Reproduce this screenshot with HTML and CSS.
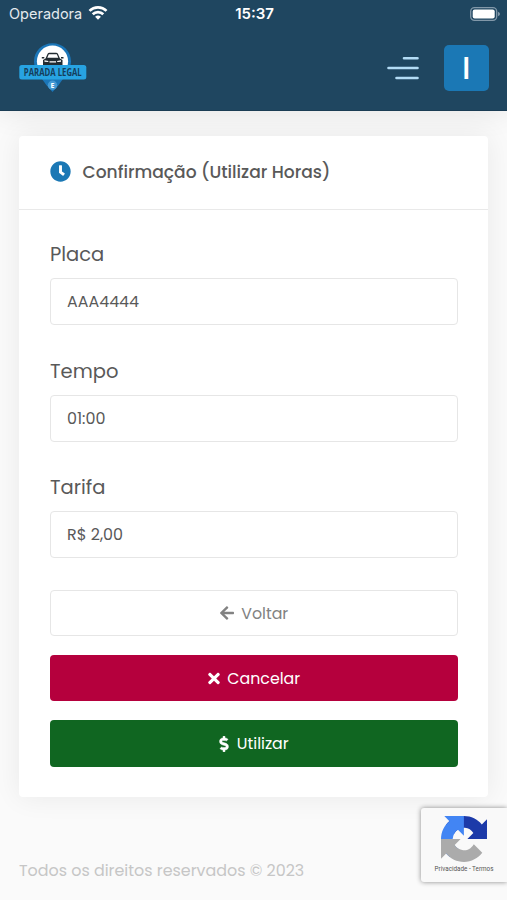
FILE: index.html
```
<!DOCTYPE html>
<html lang="pt-BR">
<head>
  <meta charset="UTF-8">
  <meta name="viewport" content="width=device-width, initial-scale=1">
  <title>Parada Legal</title>
  <link rel="stylesheet" href="styles.css">
</head>
<body>
  <header class="topbar">
    <div class="status">
      <div class="carrier">
        <span>Operadora</span>
        <svg width="20" height="15" viewBox="0 0 20 15" fill="none" stroke="#fff" stroke-width="2.7">
          <path d="M1.500 4.900a12.200 12.200 0 0 1 17 0M4.700 8.200a7.600 7.600 0 0 1 10.600 0"/>
          <path d="M10 13.700L7.100 10.800a4.200 4.200 0 0 1 5.800 0z" fill="#fff" stroke="none"/>
        </svg>
      </div>
      <span class="time">15:37</span>
      <svg class="battery" width="30" height="14" viewBox="0 0 30 14">
        <rect x=".7" y=".7" width="26" height="12.6" rx="3.8" fill="none" stroke="#8298a9" stroke-width="1.3"/>
        <rect x="2.7" y="2.5" width="22" height="9" rx="2" fill="#fff"/>
        <path d="M28 4.8q2 .7 2 2.2t-2 2.2z" fill="#8298a9"/>
      </svg>
    </div>
    <nav class="nav">
      <svg class="logo" width="68" height="50" viewBox="0 0 68 50">
        <path d="M33.500.3C23 .3 15 8.300 15 18.500c0 9 7.500 16 12.300 23.500l6.200 7 6.200-7C44.500 34.500 52 27.500 52 18.500 52 8.300 44 .3 33.500.3z" fill="#1b76b8"/>
        <circle cx="33.500" cy="18.200" r="15.600" fill="#fff"/>
        <path d="M24 17l2.500-1.500 2-4.500q.5-1.200 2-1.200h6.500q1.500 0 2 1.200l2 4.500 2.500 1.500v5h-19.500z" fill="#222b31"/>
        <path d="M22.800 14h2.500v1.500h-2.500zM42 14h2.500v1.500h-2.500z" fill="#222b31"/>
        <path d="M28.300 14.800l1.500-3.500h8l1.500 3.500zM25.500 17.300l3.800.6v1.200l-3.800-.4zM42 17.300l-3.800.6v1.200l3.800-.4zM30.500 18.300h6.500v1.100h-6.500z" fill="#fff"/>
        <rect x=".3" y="22" width="67" height="14.500" rx="2.500" fill="#27a3e2"/>
        <text class="logo-name" transform="translate(33.800 33) scale(.74 1)">PARADA LEGAL</text>
        <circle cx="33.500" cy="42.300" r="4.700" fill="#4499d3"/>
        <text x="33.500" y="44.800" class="logo-mark">E</text>
      </svg>
      <svg class="menu" width="32" height="24" viewBox="0 0 32 24" stroke="#b3dcf5" stroke-width="2.600" stroke-linecap="round">
        <path d="M17 2.200h13.500M1.500 12h29M9.500 22h21"/>
      </svg>
      <div class="avatar"><span>I</span></div>
    </nav>
  </header>

  <main class="card">
    <div class="card-header">
      <svg width="21" height="21" viewBox="0 0 512 512" fill="#1b78b5">
        <path d="M256 8C119 8 8 119 8 256s111 248 248 248 248-111 248-248S393 8 256 8zm57.100 350.100L224.900 294c-3.100-2.300-4.900-5.900-4.900-9.700V116c0-6.600 5.400-12 12-12h48c6.600 0 12 5.400 12 12v137.700l63.500 46.200c5.400 3.900 6.500 11.400 2.600 16.800l-28.200 38.800c-3.900 5.300-11.400 6.500-16.800 2.600z"/>
      </svg>
      <h1>Confirmação (Utilizar Horas)</h1>
    </div>
    <div class="card-body">
      <div class="field">
        <label>Placa</label>
        <div class="control">AAA4444</div>
      </div>
      <div class="field">
        <label>Tempo</label>
        <div class="control">01:00</div>
      </div>
      <div class="field">
        <label>Tarifa</label>
        <div class="control">R$ 2,00</div>
      </div>
      <div class="actions">
        <button class="btn btn-back">
          <svg width="14" height="16" viewBox="0 0 448 512" fill="currentColor"><path d="M257.500 445.100l-22.200 22.200c-9.400 9.400-24.600 9.400-33.900 0L7 273c-9.400-9.400-9.400-24.600 0-33.900L201.400 44.700c9.400-9.400 24.600-9.400 33.900 0l22.200 22.200c9.500 9.500 9.300 25-.4 34.300L136.600 216H424c13.300 0 24 10.700 24 24v32c0 13.300-10.700 24-24 24H136.600l120.500 114.800c9.800 9.300 10 24.800.4 34.300z"/></svg>
          <span>Voltar</span>
        </button>
        <button class="btn btn-cancel">
          <svg width="12" height="17" viewBox="0 0 352 512" fill="currentColor"><path d="M242.720 256l100.070-100.070c12.280-12.280 12.280-32.190 0-44.480l-22.240-22.240c-12.280-12.280-32.190-12.280-44.480 0L176 189.280 75.930 89.210c-12.280-12.280-32.190-12.280-44.480 0L9.210 111.450c-12.280 12.280-12.280 32.190 0 44.480L109.280 256 9.210 356.070c-12.280 12.280-12.280 32.190 0 44.480l22.240 22.240c12.280 12.280 32.200 12.280 44.480 0L176 322.720l100.070 100.070c12.280 12.280 32.200 12.280 44.480 0l22.240-22.240c12.280-12.280 12.280-32.190 0-44.480L242.720 256z"/></svg>
          <span>Cancelar</span>
        </button>
        <button class="btn btn-use">
          <svg width="10" height="16" viewBox="0 0 288 512" fill="currentColor" stroke="currentColor" stroke-width="14"><path d="M209.200 233.400l-108-31.600C88.700 198.200 80 186.500 80 173.500c0-16.300 13.200-29.500 29.500-29.500h66.300c12.200 0 24.200 3.700 34.200 10.500 6.100 4.100 14.300 3.100 19.500-2l34.800-34c7.100-6.900 6.100-18.400-1.800-24.500C238 74.800 207.400 64.100 176 64V16c0-8.800-7.200-16-16-16h-32c-8.800 0-16 7.200-16 16v48h-2.500C45.800 64-5.400 118.700.5 183.600c4.200 46.100 39.400 83.600 83.800 96.600l102.500 30c12.500 3.700 21.200 15.300 21.200 28.300 0 16.300-13.200 29.500-29.500 29.500h-66.300C100 368 88 364.300 78 357.500c-6.100-4.100-14.300-3.100-19.500 2l-34.800 34c-7.100 6.900-6.100 18.400 1.800 24.500 24.500 19.200 55.100 29.900 86.500 30v48c0 8.800 7.200 16 16 16h32c8.800 0 16-7.200 16-16v-48.200c46.600-.9 90.300-28.600 105.700-72.700 21.500-61.600-14.600-124.800-72.500-141.700z"/></svg>
          <span>Utilizar</span>
        </button>
      </div>
    </div>
  </main>

  <footer class="footer">Todos os direitos reservados © 2023</footer>

  <aside class="recaptcha">
    <svg width="46" height="46" viewBox="0 0 64 64">
      <path fill="#1c3aa9" d="M64 31.955l-.033-1.370V4.687l-7.160 7.160C50.948 4.674 42.033.093 32.050.093c-10.400 0-19.622 4.960-25.458 12.640l11.736 11.860a15.550 15.550 0 0 1 4.754-5.334c2.050-1.600 4.952-2.906 8.968-2.906.485 0 .86.057 1.135.163 4.976.393 9.288 3.140 11.828 7.124l-8.307 8.307L64 31.953"/>
      <path fill="#4285f4" d="M31.862.094l-1.370.033H4.594l7.160 7.160C4.580 13.147 0 22.060 0 32.046c0 10.400 4.960 19.622 12.640 25.458L24.500 45.768a15.550 15.550 0 0 1-5.334-4.754c-1.600-2.050-2.906-4.952-2.906-8.968 0-.485.057-.86.163-1.135.393-4.976 3.140-9.288 7.124-11.828l8.307 8.307L31.860.095"/>
      <path fill="#ababab" d="M.001 32.045l.033 1.370v25.898l7.160-7.160c5.860 7.173 14.774 11.754 24.760 11.754 10.400 0 19.622-4.960 25.458-12.640l-11.736-11.860a15.550 15.550 0 0 1-4.754 5.334c-2.050 1.600-4.952 2.906-8.968 2.906-.485 0-.86-.057-1.135-.163-4.976-.393-9.288-3.140-11.828-7.124l8.307-8.307c-10.522.04-22.400.066-27.295-.005"/>
    </svg>
    <span>Privacidade - Termos</span>
  </aside>
</body>
</html>
```
FILE: styles.css
```
* {
  box-sizing: border-box;
}

body {
  margin: 0;
  height: 900px;
  overflow: hidden;
  position: relative;
  background: #fafafa;
  color: #595959;
  font-family: Poppins, Inter, sans-serif;
}

svg {
  display: block;
  flex: none;
}

.topbar {
  height: 111px;
  background: #1f4660;
  border-bottom: 1px solid #1a3c54;
  box-shadow: 0 0 28px rgba(0, 0, 0, 0.1);
}

.status {
  height: 27px;
  padding: 0 7px 0 9px;
  display: grid;
  grid-template-columns: 1fr auto 1fr;
  align-items: center;
  color: #fff;
  font-family: Inter, sans-serif;
  font-size: 14.5px;
}

.carrier {
  display: flex;
  align-items: center;
  gap: 6px;
  color: #e4eaee;
}

.time {
  font-size: 15px;
  font-weight: 600;
}

.battery {
  justify-self: end;
}

.nav {
  height: 82px;
  padding: 0 18px 0 19px;
  display: flex;
  align-items: center;
}

.logo-name {
  font: bold 10.5px "Open Sans", sans-serif;
  fill: #153d5a;
  text-anchor: middle;
}

.logo-mark {
  font: bold 7px "Open Sans", sans-serif;
  fill: #fff;
  text-anchor: middle;
}

.menu {
  margin-left: auto;
  margin-right: 25px;
}

.avatar {
  width: 45.500px;
  height: 46px;
  border-radius: 5px;
  background: #1b78b5;
  color: #fff;
  display: flex;
  align-items: center;
  justify-content: center;
  font-size: 32px;
  font-weight: 500;
}

.card {
  margin: 25px 19px 0;
  height: 661px;
  border-radius: 4px;
  background: #fff;
  box-shadow: 0 0 28px rgba(0, 0, 0, 0.07);
}

.card-header {
  height: 74px;
  padding: 0 31px 2px;
  border-bottom: 1px solid #e9e9e9;
  display: flex;
  align-items: center;
  gap: 11.500px;
}

.card-header h1 {
  margin: 0;
  font-size: 17.100px;
  font-weight: 500;
}

.card-body {
  padding: 30px 30px 0 31px;
}

.field {
  margin-bottom: 31.500px;
}

.field label {
  display: block;
  height: 38px;
  line-height: 29px;
  font-size: 19.500px;
}

.control {
  height: 47px;
  padding: 0 16px;
  border: 1px solid #e6e6e6;
  border-radius: 4px;
  line-height: 45px;
  font-size: 15.900px;
}

.actions {
  display: flex;
  flex-direction: column;
  gap: 19px;
}

.btn {
  height: 46.400px;
  padding: 1px 0 0;
  border: 0;
  border-radius: 4px;
  display: flex;
  align-items: center;
  justify-content: center;
  gap: 7.500px;
  color: #fff;
  font-family: inherit;
  font-size: 15.800px;
}

.btn-back {
  border: 1px solid #e6e6e6;
  background: #fff;
  color: #828282;
}

.btn-cancel {
  background: #b5003d;
}

.btn-use {
  background: #106621;
}

.footer {
  margin: 61px 19px 0;
  line-height: 26px;
  font-size: 15.900px;
  color: #c6c6c6;
}

/* badge stays over the page corner */
.recaptcha {
  position: absolute;
  right: 0;
  bottom: 18px;
  width: 86px;
  height: 74px;
  padding-top: 8px;
  border-radius: 3px 0 0 3px;
  background: #f9f9f9;
  box-shadow: 0 0 5px #888;
  display: flex;
  flex-direction: column;
  align-items: center;
  font-family: Roboto, sans-serif;
  font-size: 6.300px;
  line-height: 14px;
  color: #555;
}
```
